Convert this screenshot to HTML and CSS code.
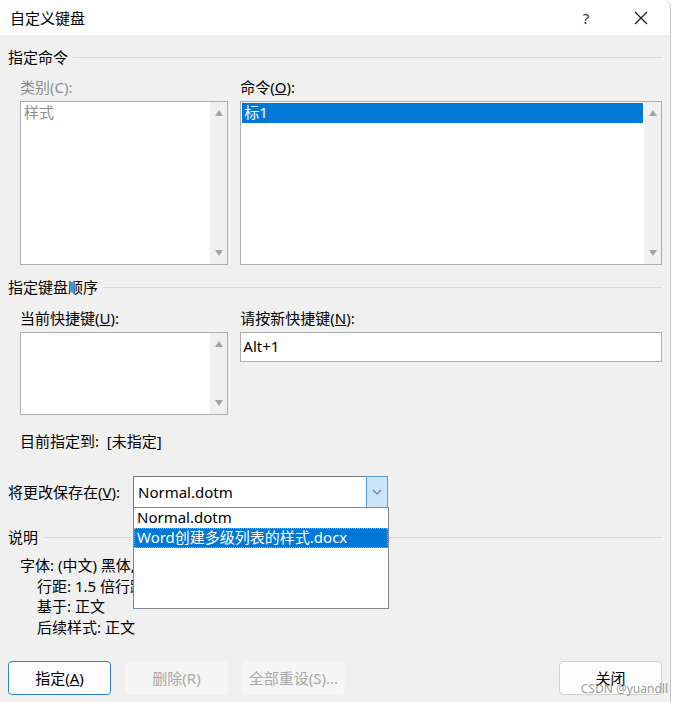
FILE: index.html
```html
<!DOCTYPE html>
<html lang="zh-CN">
<head>
    <meta charset="UTF-8">
    <title>自定义键盘</title>
    <link rel="stylesheet" href="styles.css">
</head>
<body>
    <div class="dialog">
        <div class="titlebar">
            <div class="title">自定义键盘</div>
            <div class="title-help">?</div>
            <div class="title-close">
                <svg width="14" height="14" viewBox="0 0 14 14"><path d="M1 1 L13 13 M13 1 L1 13" stroke="#1a1a1a" stroke-width="1.2" fill="none"/></svg>
            </div>
        </div>

        <div class="content">
            <div class="group-title"><span>指定命令</span></div>
            <div class="columns">
                <div class="col-left">
                    <div class="label disabled">类别(C):</div>
                    <div class="listbox tall">
                        <div class="list-items">
                            <div class="item disabled">样式</div>
                        </div>
                        <div class="scrollbar">
                            <span class="arrow up"></span>
                            <span class="arrow down"></span>
                        </div>
                    </div>
                </div>
                <div class="col-right">
                    <div class="label">命令(<u>O</u>):</div>
                    <div class="listbox tall">
                        <div class="list-items">
                            <div class="item selected">标1</div>
                        </div>
                        <div class="scrollbar">
                            <span class="arrow up"></span>
                            <span class="arrow down"></span>
                        </div>
                    </div>
                </div>
            </div>

            <div class="group-title second"><span>指定键盘顺序</span></div>
            <div class="columns keys">
                <div class="col-left">
                    <div class="label">当前快捷键(<u>U</u>):</div>
                    <div class="listbox short">
                        <div class="list-items"></div>
                        <div class="scrollbar">
                            <span class="arrow up"></span>
                            <span class="arrow down"></span>
                        </div>
                    </div>
                </div>
                <div class="col-right">
                    <div class="label">请按新快捷键(<u>N</u>):</div>
                    <div class="textbox">Alt+1</div>
                </div>
            </div>

            <div class="assigned">目前指定到:&nbsp;&nbsp;[未指定]</div>

            <div class="save-row">
                <div class="save-label">将更改保存在(<u>V</u>):</div>
                <div class="combo">
                    <div class="combo-value">Normal.dotm</div>
                    <div class="combo-btn">
                        <svg width="10" height="6" viewBox="0 0 10 6"><path d="M1 1 L5 5 L9 1" stroke="#6a7a8a" stroke-width="1.1" fill="none"/></svg>
                    </div>
                    <div class="combo-list">
                        <div class="combo-item">Normal.dotm</div>
                        <div class="combo-item active">Word创建多级列表的样式.docx</div>
                    </div>
                </div>
            </div>

            <div class="group-title desc-title"><span>说明</span></div>
            <div class="desc">
                <div class="desc-line">字体: (中文) 黑体, 小四, 缩进:</div>
                <div class="desc-line sub">行距: 1.5 倍行距, 样式: 链接, 在样式库中显示</div>
                <div class="desc-line sub">基于: 正文</div>
                <div class="desc-line sub">后续样式: 正文</div>
            </div>

            <div class="buttons">
                <button class="btn default">指定(<u>A</u>)</button>
                <button class="btn" disabled>删除(R)</button>
                <button class="btn" disabled>全部重设(S)...</button>
                <div class="spacer"></div>
                <button class="btn">关闭</button>
            </div>
        </div>
        <div class="watermark">CSDN @yuandll</div>
    </div>
</body>
</html>
```

FILE: styles.css
```css
* {
    margin: 0;
    padding: 0;
    box-sizing: border-box;
}

body {
    font-family: "Noto Sans", "Noto Sans CJK SC", sans-serif;
    font-size: 15px;
    line-height: 20px;
    color: #000000;
    background-color: #ffffff;
    width: 674px;
    height: 702px;
    overflow: hidden;
}

.dialog {
    position: relative;
    width: 671px;
    height: 702px;
    background: #f0f0f0;
    border-right: 1px solid #c4c4c4;
    border-top-right-radius: 8px;
}

.titlebar {
    display: flex;
    align-items: center;
    height: 35px;
    background: #ffffff;
    border-top-right-radius: 8px;
}

.title {
    flex: 1;
    padding-left: 10px;
}

.title-help {
    width: 20px;
    margin-right: 38px;
    text-align: center;
    color: #333333;
}

.title-close {
    display: flex;
    align-items: center;
    margin-right: 22px;
}

.content {
    padding: 12px 8px 0 8px;
}

.group-title {
    display: flex;
    align-items: center;
    gap: 5px;
    height: 20px;
}

.group-title::after {
    content: "";
    flex: 1;
    height: 1px;
    background: #dadada;
}

.group-title.second {
    margin-top: 12px;
}

.columns {
    display: flex;
    gap: 12px;
    padding-left: 12px;
    margin-top: 10px;
}

.columns.keys {
    margin-top: 11px;
}

.col-left {
    width: 209px;
}

.col-right {
    width: 423px;
}

.label {
    height: 20px;
    margin-bottom: 4px;
}

.label.disabled,
.item.disabled {
    color: #8d8d8d;
}

.listbox {
    display: flex;
    background: #ffffff;
    border: 1px solid #abadb3;
}

.listbox.tall {
    height: 164px;
}

.listbox.short {
    height: 83px;
}

.list-items {
    flex: 1;
    padding: 1px;
}

.item {
    height: 20px;
    padding-left: 2px;
    line-height: 19px;
}

.item.selected {
    background: #0078d7;
    color: #ffffff;
}

.scrollbar {
    display: flex;
    flex-direction: column;
    justify-content: space-between;
    align-items: center;
    width: 17px;
    padding: 8px 0;
    background: #f0f0f0;
}

.arrow {
    width: 0;
    height: 0;
    border-left: 4.5px solid transparent;
    border-right: 4.5px solid transparent;
}

.arrow.up {
    border-bottom: 6px solid #a3a3a3;
}

.arrow.down {
    border-top: 6px solid #a3a3a3;
}

.textbox {
    height: 30px;
    background: #ffffff;
    border: 1px solid #abadb3;
    padding: 3px 2px;
}

.assigned {
    margin-top: 16px;
    padding-left: 12px;
}

.save-row {
    display: flex;
    align-items: center;
    margin-top: 25px;
}

.save-label {
    width: 125px;
}

.combo {
    position: relative;
    display: flex;
    width: 255px;
    height: 32px;
    background: #ffffff;
    border: 1px solid #7a7a7a;
}

.combo-value {
    flex: 1;
    padding: 5px 4px;
}

.combo-btn {
    display: flex;
    align-items: center;
    justify-content: center;
    width: 22px;
    margin: -1px -1px -1px 0;
    background: #cce4f7;
    border: 1px solid #569de5;
}

.combo-list {
    position: absolute;
    left: -1px;
    top: 30px;
    width: 256px;
    height: 102px;
    background: #ffffff;
    border: 1px solid #828790;
    z-index: 2;
}

.combo-item {
    height: 20px;
    padding-left: 3px;
    line-height: 19px;
}

.combo-item.active {
    background: #0078d7;
    color: #ffffff;
    outline: 1px dotted #e49a3a;
    outline-offset: -1px;
}

.desc-title {
    margin-top: 19px;
}

.desc {
    margin-top: 8px;
    padding-left: 12px;
    white-space: nowrap;
}

.desc-line {
    height: 20.7px;
}

.desc-line.sub {
    padding-left: 17px;
}

.buttons {
    display: flex;
    gap: 14px;
    margin-top: 23px;
}

.spacer {
    flex: 1;
}

.btn {
    width: 103px;
    height: 34px;
    font: inherit;
    color: #000000;
    background: #fdfdfd;
    border: 1px solid #d0d0d0;
    border-radius: 4px;
}

.btn.default {
    border-color: #2f7fd0;
}

.btn:disabled {
    color: #a8a8a8;
    background: #f5f5f5;
    border-color: #f5f5f5;
}

.watermark {
    position: absolute;
    right: 2px;
    bottom: 6px;
    font-size: 12px;
    line-height: 14px;
    color: rgba(120, 120, 120, 0.75);
}
```
